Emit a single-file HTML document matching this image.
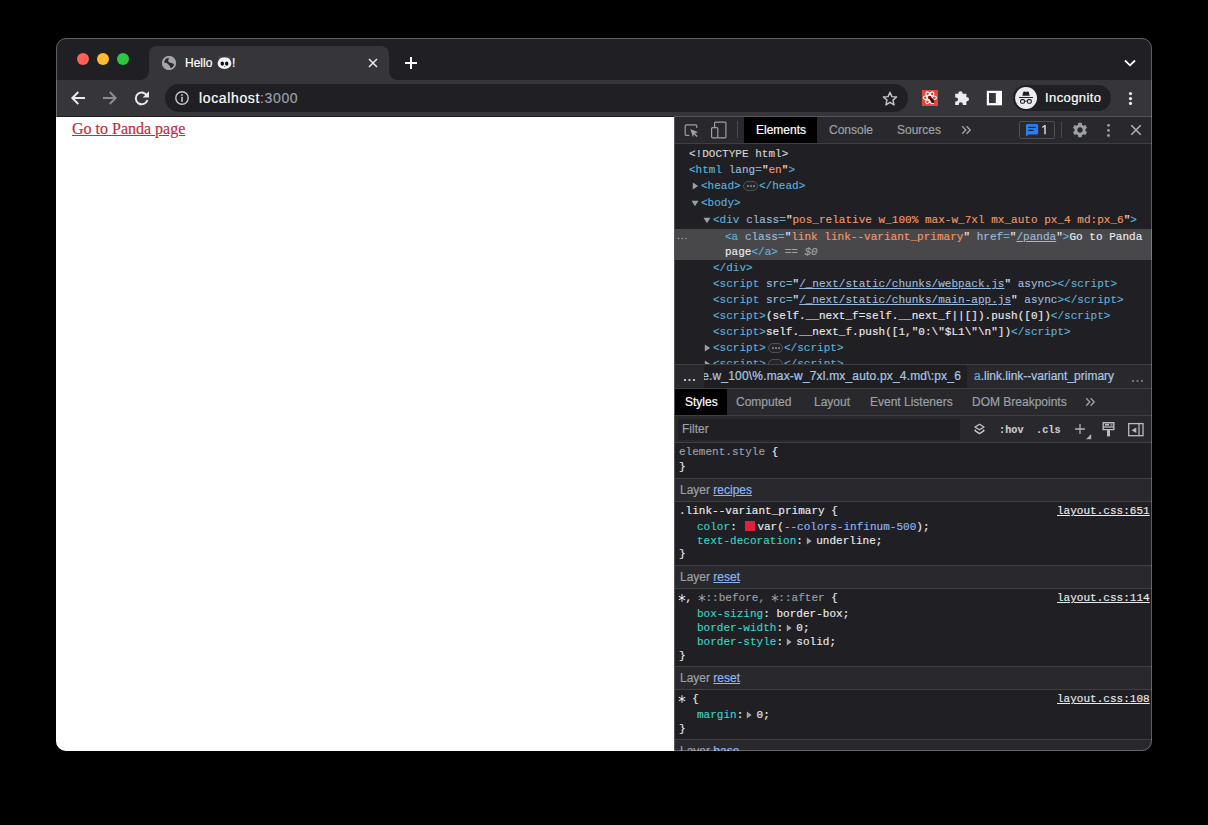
<!DOCTYPE html>
<html><head><meta charset="utf-8">
<style>
*{box-sizing:border-box;margin:0;padding:0}
html,body{width:1208px;height:825px;overflow:hidden;background:#000}
body{position:relative;font-family:"Liberation Sans",sans-serif}
.a{position:absolute}
#win{position:absolute;left:0;top:0;width:1208px;height:825px;clip-path:inset(38px 56px 74px 56px round 10px)}
#winborder{position:absolute;left:56px;top:38px;width:1096px;height:713px;border-radius:10px;border:1px solid rgba(255,255,255,0.28);pointer-events:none}
.dot{position:absolute;width:12px;height:12px;border-radius:50%}
.m{font-family:"Liberation Mono",monospace;font-size:11px;letter-spacing:0.022px;-webkit-text-stroke:0.15px currentColor;white-space:pre;line-height:16px;height:16px;position:absolute}
.s{font-family:"Liberation Sans",sans-serif;white-space:pre;position:absolute;-webkit-text-stroke:0.2px currentColor}
.tg{color:#5db0d7}
.at{color:#9bbbdc}
.av{color:#f29766}
.tx{color:#e8eaed}
.gr{color:#9aa0a6}
.pr{color:#35d4c7}
.u{text-decoration:underline}
</style></head>
<body>
<div id="win">
  <div class="a" style="left:56px;top:38px;width:1096px;height:42px;background:#201f24"></div>
  <!-- traffic lights -->
  <div class="dot" style="left:77px;top:53px;background:#ff5f57"></div>
  <div class="dot" style="left:97px;top:53px;background:#febc2e"></div>
  <div class="dot" style="left:117px;top:53px;background:#28c840"></div>
  <!-- active tab -->
  <div class="a" style="left:149px;top:46px;width:240px;height:34px;background:#36353a;border-radius:8px 8px 0 0"></div>
  <div class="a" style="left:141px;top:72px;width:8px;height:8px;background:radial-gradient(circle at 0 0, transparent 7.5px, #36353a 8px)"></div>
  <div class="a" style="left:389px;top:72px;width:8px;height:8px;background:radial-gradient(circle at 100% 0, transparent 7.5px, #36353a 8px)"></div>
  <div class="s" style="left:185px;top:56px;font-size:12px;color:#fff;line-height:14px">Hello</div>
  <div class="s" style="left:232px;top:56px;font-size:12px;color:#fff;line-height:14px">!</div>
  <!-- toolbar -->
  <div class="a" style="left:56px;top:80px;width:1096px;height:36px;background:#36353a"></div>
  <div class="a" style="left:56px;top:116px;width:1096px;height:1px;background:#201f24"></div>
  <!-- omnibox -->
  <div class="a" style="left:165px;top:84px;width:743px;height:28px;border-radius:14px;background:#201f24"></div>
  <div class="s" style="left:199px;top:90px;font-size:14px;line-height:16px;color:#fff;letter-spacing:0.64px">localhost<span style="color:#9aa0a6">:3000</span></div>
  <div class="a" style="left:1013px;top:85px;width:98px;height:26px;border-radius:13px;background:#201f24"></div>
  <div class="s" style="left:1045px;top:90px;font-size:13px;line-height:16px;color:#fff;letter-spacing:0.4px">Incognito</div>
  <!-- content -->
  <div class="a" style="left:56px;top:117px;width:618px;height:634px;background:#fff"></div>
  <div class="s" style="left:72px;top:119px;font-family:'Liberation Serif',serif;font-size:16px;color:#c62c3e;text-decoration:underline;line-height:20px">Go to Panda page</div>
  <!-- devtools -->
  <div class="a" style="left:674px;top:117px;width:478px;height:634px;background:#201f24"></div>
  <div class="a" style="left:674px;top:116px;width:478px;height:1px;background:#56565a"></div>
  <div class="a" style="left:674px;top:116px;width:1px;height:635px;background:#56565a"></div>

  <!-- devtools toolbar -->
  <div class="a" style="left:675px;top:117px;width:477px;height:26px;background:#29282d"></div>
  <div class="a" style="left:675px;top:143px;width:477px;height:1px;background:#3f3f42"></div>
  <div class="a" style="left:744px;top:117px;width:73px;height:26px;background:#000"></div>
  <div class="s" style="left:756px;top:123px;font-size:12px;line-height:14px;color:#fff">Elements</div>
  <div class="s" style="left:829px;top:123px;font-size:12px;line-height:14px;color:#9aa0a6">Console</div>
  <div class="s" style="left:897px;top:123px;font-size:12px;line-height:14px;color:#9aa0a6">Sources</div>
  <div class="a" style="left:737px;top:121px;width:1px;height:17px;background:#4a4a4d"></div>
  <div class="a" style="left:1061px;top:122px;width:1px;height:16px;background:#4a4a4d"></div>
  <div class="a" style="left:1019px;top:121px;width:36px;height:18px;border:1px solid #4d4d52;border-radius:2px"></div>
  <svg class="a" style="left:1041px;top:124px" width="7" height="12" viewBox="0 0 7 12"><path d="M4,1.3 V10.2" stroke="#d5d7da" stroke-width="1.5"/><path d="M1.3,3.4 L4.2,1.2" stroke="#d5d7da" stroke-width="1.3"/></svg>
  <!-- elements tree -->
  <div class="m" style="left:689px;top:146px;color:#d2d3d5">&lt;!DOCTYPE html&gt;</div>
  <div class="m" style="left:689px;top:162px"><span class="tg">&lt;html</span> <span class="at">lang</span><span class="tg">=</span><span class="tx">"</span><span class="av">en</span><span class="tx">"</span><span class="tg">&gt;</span></div>
  <div class="m" style="left:701px;top:178px"><span class="tg">&lt;head&gt;</span></div>
  <div class="m" style="left:701px;top:195px"><span class="tg">&lt;body&gt;</span></div>
  <div class="m" style="left:713px;top:212px"><span class="tg">&lt;div</span> <span class="at">class</span><span class="tg">=</span><span class="tx">"</span><span class="av">pos_relative w_100% max-w_7xl mx_auto px_4 md:px_6</span><span class="tx">"</span><span class="tg">&gt;</span></div>
  <div class="a" style="left:675px;top:229px;width:477px;height:31px;background:#48484b"></div>
  <div class="m" style="left:725px;top:229px"><span class="tg">&lt;a</span> <span class="at">class</span><span class="tg">=</span><span class="tx">"</span><span class="av">link link--variant_primary</span><span class="tx">"</span> <span class="at">href</span><span class="tg">=</span><span class="tx">"</span><span class="at u">/panda</span><span class="tx">"</span><span class="tg">&gt;</span><span class="tx">Go to Panda</span></div>
  <div class="m" style="left:725px;top:244px"><span class="tx">page</span><span class="tg">&lt;/a&gt;</span> <span class="gr">== <i>$0</i></span></div>
  <div class="m" style="left:713px;top:260px"><span class="tg">&lt;/div&gt;</span></div>
  <div class="m" style="left:713px;top:276px"><span class="tg">&lt;script</span> <span class="at">src</span><span class="tg">=</span><span class="tx">"</span><span class="at u">/_next/static/chunks/webpack.js</span><span class="tx">"</span> <span class="at">async</span><span class="tg">&gt;&lt;/script&gt;</span></div>
  <div class="m" style="left:713px;top:292px"><span class="tg">&lt;script</span> <span class="at">src</span><span class="tg">=</span><span class="tx">"</span><span class="at u">/_next/static/chunks/main-app.js</span><span class="tx">"</span> <span class="at">async</span><span class="tg">&gt;&lt;/script&gt;</span></div>
  <div class="m" style="left:713px;top:308px"><span class="tg">&lt;script&gt;</span><span class="tx">(self.__next_f=self.__next_f||[]).push([0])</span><span class="tg">&lt;/script&gt;</span></div>
  <div class="m" style="left:713px;top:324px"><span class="tg">&lt;script&gt;</span><span class="tx">self.__next_f.push([1,"0:\"$L1\"\n"])</span><span class="tg">&lt;/script&gt;</span></div>
  <div class="m" style="left:713px;top:340px"><span class="tg">&lt;script&gt;</span></div>
  <div class="m" style="left:713px;top:356px"><span class="tg">&lt;script&gt;</span></div>

  <!-- tree triangles & badges -->
  <svg class="a" style="left:692px;top:182px" width="7" height="8" viewBox="0 0 7 8"><path d="M0.8,0.5 L6.2,4 L0.8,7.5 Z" fill="#9aa0a6"/></svg>
  <svg class="a" style="left:691px;top:200px" width="8" height="7" viewBox="0 0 8 7"><path d="M0.5,0.8 L7.5,0.8 L4,6.2 Z" fill="#9aa0a6"/></svg>
  <svg class="a" style="left:703px;top:217px" width="8" height="7" viewBox="0 0 8 7"><path d="M0.5,0.8 L7.5,0.8 L4,6.2 Z" fill="#9aa0a6"/></svg>
  <svg class="a" style="left:704px;top:344px" width="7" height="8" viewBox="0 0 7 8"><path d="M0.8,0.5 L6.2,4 L0.8,7.5 Z" fill="#9aa0a6"/></svg>
  <svg class="a" style="left:704px;top:360px" width="7" height="8" viewBox="0 0 7 8"><path d="M0.8,0.5 L6.2,4 L0.8,7.5 Z" fill="#9aa0a6"/></svg>
  <div class="a" style="left:743px;top:181px;width:15px;height:10px;border:1px solid #505055;border-radius:5px;background:#26262a"></div>
  <svg class="a" style="left:746px;top:184px" width="10" height="4" viewBox="0 0 10 4"><circle cx="2" cy="2" r="0.85" fill="#bdc1c6"/><circle cx="5" cy="2" r="0.85" fill="#bdc1c6"/><circle cx="8" cy="2" r="0.85" fill="#bdc1c6"/></svg>
  <div class="m" style="left:759px;top:178px"><span class="tg">&lt;/head&gt;</span></div>
  <div class="a" style="left:768px;top:343px;width:15px;height:10px;border:1px solid #505055;border-radius:5px;background:#26262a"></div>
  <svg class="a" style="left:771px;top:346px" width="10" height="4" viewBox="0 0 10 4"><circle cx="2" cy="2" r="0.85" fill="#bdc1c6"/><circle cx="5" cy="2" r="0.85" fill="#bdc1c6"/><circle cx="8" cy="2" r="0.85" fill="#bdc1c6"/></svg>
  <div class="m" style="left:784px;top:340px"><span class="tg">&lt;/script&gt;</span></div>
  <div class="a" style="left:768px;top:359px;width:15px;height:10px;border:1px solid #505055;border-radius:5px;background:#26262a"></div>
  <div class="m" style="left:784px;top:356px"><span class="tg">&lt;/script&gt;</span></div>
  <svg class="a" style="left:677px;top:237px" width="11" height="3" viewBox="0 0 11 3"><circle cx="1.5" cy="1.5" r="0.8" fill="#9aa0a6"/><circle cx="5.3" cy="1.5" r="0.8" fill="#9aa0a6"/><circle cx="9.1" cy="1.5" r="0.8" fill="#9aa0a6"/></svg>
  <!-- breadcrumb -->
  <div class="a" style="left:675px;top:364px;width:477px;height:1px;background:#3f3f42"></div>
  <div class="a" style="left:675px;top:365px;width:477px;height:23px;background:#29282d"></div>
  <div class="a" style="left:675px;top:388px;width:477px;height:1px;background:#3f3f42"></div>
  <div class="a" style="left:704px;top:365px;width:263px;height:23px;background:#1f1f22;overflow:hidden"><div class="s" style="right:6px;top:4px;font-size:12px;line-height:14px;color:#a9c6e2;letter-spacing:0.18px">div.pos_relative.w_100\%.max-w_7xl.mx_auto.px_4.md\:px_6</div></div>
  <svg class="a" style="left:683px;top:378px" width="13" height="4" viewBox="0 0 13 4"><rect x="1" y="1" width="2" height="2" fill="#bdc1c6"/><rect x="5.5" y="1" width="2" height="2" fill="#bdc1c6"/><rect x="10" y="1" width="2" height="2" fill="#bdc1c6"/></svg>
  <svg class="a" style="left:1131px;top:379px" width="13" height="4" viewBox="0 0 13 4"><rect x="1" y="1" width="2" height="2" fill="#6f7378"/><rect x="5.5" y="1" width="2" height="2" fill="#6f7378"/><rect x="10" y="1" width="2" height="2" fill="#6f7378"/></svg>
  <div class="s" style="left:974px;top:369px;font-size:12px;line-height:14px;color:#a9c6e2"><span style="color:#5db0d7">a</span>.link.link--variant_primary</div>
  <!-- styles tabs -->
  <div class="a" style="left:675px;top:389px;width:477px;height:26px;background:#29282d"></div>
  <div class="a" style="left:675px;top:415px;width:477px;height:1px;background:#3f3f42"></div>
  <div class="a" style="left:675px;top:389px;width:52px;height:26px;background:#000"></div>
  <div class="s" style="left:685px;top:395px;font-size:12px;line-height:14px;color:#fff">Styles</div>
  <div class="s" style="left:736px;top:395px;font-size:12px;line-height:14px;color:#9aa0a6">Computed</div>
  <div class="s" style="left:814px;top:395px;font-size:12px;line-height:14px;color:#9aa0a6">Layout</div>
  <div class="s" style="left:870px;top:395px;font-size:12px;line-height:14px;color:#9aa0a6">Event Listeners</div>
  <div class="s" style="left:972px;top:395px;font-size:12px;line-height:14px;color:#9aa0a6">DOM Breakpoints</div>
  <!-- filter -->
  <div class="a" style="left:675px;top:416px;width:477px;height:26px;background:#29282d"></div>
  <div class="a" style="left:678px;top:419px;width:282px;height:21px;background:#201f24"></div>
  <div class="a" style="left:675px;top:442px;width:477px;height:1px;background:#3f3f42"></div>
  <div class="s" style="left:682px;top:422px;font-size:12px;line-height:14px;color:#9aa0a6">Filter</div>
  <div class="m" style="left:999px;top:423px;font-weight:bold;color:#c9cbce;font-size:10.2px">:hov</div>
  <div class="m" style="left:1036px;top:423px;font-weight:bold;color:#c9cbce;font-size:10.2px">.cls</div>

  <svg class="a" style="left:1085px;top:397px" width="11" height="10" viewBox="0 0 11 10"><path d="M1.2,1.2 L4.8,5 L1.2,8.8 M5.6,1.2 L9.2,5 L5.6,8.8" stroke="#9aa0a6" stroke-width="1.4" fill="none"/></svg>
  <svg class="a" style="left:973px;top:423px" width="13" height="12" viewBox="0 0 13 12"><path d="M6.5,1.2 L11,4 L6.5,6.8 L2,4 Z" stroke="#c5c7ca" stroke-width="1.3" fill="none" stroke-linejoin="round"/><path d="M3,6.9 L2,7.6 L6.5,10.6 L11,7.6 L10,6.9" stroke="#c5c7ca" stroke-width="1.3" fill="none" stroke-linejoin="round"/></svg>
  <svg class="a" style="left:1074px;top:423px" width="19" height="17" viewBox="0 0 19 17"><path d="M6,1 V11 M1,6 H11" stroke="#aeb1b5" stroke-width="1.3"/><path d="M17.2,11 V16.2 H12 Z" fill="#aeb1b5"/></svg>
  <svg class="a" style="left:1101px;top:421px" width="15" height="17" viewBox="0 0 15 17"><path d="M2.2,1.8 H12.8 V8.6 H2.2 Z" stroke="#b9bbbe" stroke-width="1.4" fill="none"/><path d="M2.2,6 H12.8" stroke="#b9bbbe" stroke-width="1.3"/><rect x="4" y="3" width="4" height="1.6" fill="#b9bbbe"/><rect x="9.5" y="2.8" width="2" height="2" fill="#8d9095"/><rect x="6" y="8.6" width="3" height="6.8" fill="#b9bbbe"/></svg>
  <svg class="a" style="left:1127px;top:422px" width="18" height="15" viewBox="0 0 18 15"><rect x="1.7" y="1.6" width="14.3" height="12.1" stroke="#b9bbbe" stroke-width="1.3" fill="none"/><path d="M12,1.6 V13.7" stroke="#b9bbbe" stroke-width="1.3"/><path d="M9.3,5.4 V11 L4.6,8.2 Z" fill="#b9bbbe"/></svg>
  <!-- style sections -->
  <div class="m gr" style="left:679px;top:444px">element.style <span class="tx">{</span></div>
  <div class="m tx" style="left:679px;top:459px">}</div>
  <div class="a" style="left:675px;top:478px;width:477px;height:1px;background:#3f3f42"></div>
  <div class="a" style="left:675px;top:479px;width:477px;height:22px;background:#29282d"></div>
  <div class="a" style="left:675px;top:501px;width:477px;height:1px;background:#3f3f42"></div>
  <div class="s" style="left:680px;top:483px;font-size:12px;line-height:14px;color:#9aa0a6">Layer <span class="u" style="color:#8ab4f8">recipes</span></div>
  <div class="m tx" style="left:679px;top:503px">.link--variant_primary {</div>
  <div class="m tx u" style="left:1057px;top:503px">layout.css:651</div>
  <div class="m tx" style="left:697px;top:519px"><span class="pr">color</span>: <span style="display:inline-block;width:10px;height:10px;background:#e0213d;vertical-align:-1px;margin:0 2px 0 2px"></span>var(<span style="color:#8ab4f8">--colors-infinum-500</span>);</div>
  <div class="m tx" style="left:697px;top:533px"><span class="pr">text-decoration</span>:  underline;</div>
  <div class="m tx" style="left:679px;top:546px">}</div>
  <div class="a" style="left:675px;top:565px;width:477px;height:1px;background:#3f3f42"></div>
  <div class="a" style="left:675px;top:566px;width:477px;height:22px;background:#29282d"></div>
  <div class="a" style="left:675px;top:588px;width:477px;height:1px;background:#3f3f42"></div>
  <div class="s" style="left:680px;top:570px;font-size:12px;line-height:14px;color:#9aa0a6">Layer <span class="u" style="color:#8ab4f8">reset</span></div>
  <div class="m tx" style="left:679px;top:590px"> , <span class="gr"> ::before,  ::after</span> {</div>
  <div class="m tx u" style="left:1057px;top:590px">layout.css:114</div>
  <div class="m tx" style="left:697px;top:606px"><span class="pr">box-sizing</span>: border-box;</div>
  <div class="m tx" style="left:697px;top:620px"><span class="pr">border-width</span>:  0;</div>
  <div class="m tx" style="left:697px;top:634px"><span class="pr">border-style</span>:  solid;</div>
  <div class="m tx" style="left:679px;top:648px">}</div>
  <div class="a" style="left:675px;top:666px;width:477px;height:1px;background:#3f3f42"></div>
  <div class="a" style="left:675px;top:667px;width:477px;height:22px;background:#29282d"></div>
  <div class="a" style="left:675px;top:689px;width:477px;height:1px;background:#3f3f42"></div>
  <div class="s" style="left:680px;top:671px;font-size:12px;line-height:14px;color:#9aa0a6">Layer <span class="u" style="color:#8ab4f8">reset</span></div>
  <div class="m tx" style="left:679px;top:691px">  {</div>
  <div class="m tx u" style="left:1057px;top:691px">layout.css:108</div>
  <div class="m tx" style="left:697px;top:707px"><span class="pr">margin</span>:  0;</div>
  <div class="m tx" style="left:679px;top:721px">}</div>
  <div class="a" style="left:675px;top:739px;width:477px;height:1px;background:#3f3f42"></div>
  <div class="a" style="left:675px;top:740px;width:477px;height:22px;background:#29282d"></div>
  <div class="s" style="left:680px;top:744px;font-size:12px;line-height:14px;color:#9aa0a6">Layer <span class="u" style="color:#8ab4f8">base</span></div>

  <!-- ICONS browser -->
  <svg class="a" style="left:162px;top:56px" width="14" height="14" viewBox="0 0 14 14"><circle cx="7" cy="7" r="7" fill="#a3a6aa"/><path d="M2.1,6.6 C2.3,4.8 3.3,3 4.8,2.3 L7.5,2.3 C6.3,3 6,4.6 6.5,5.8 C7,6.8 9,7 10.9,7.4 C11.6,7.7 12,8 12,8.5 C11.8,9.8 11.4,10.6 10.9,11.1 C10,11.8 9.2,12.1 8.3,12.2 C8.4,11.4 8.2,10.7 7.7,10.1 C7.2,9.2 6.6,8.6 6.1,8.2 C5.3,7.6 4.6,7.2 4,7.1 Z" fill="#2b2b2f"/><circle cx="7" cy="7" r="6.3" fill="none" stroke="#a3a6aa" stroke-width="1.3"/></svg>
  <svg class="a" style="left:217px;top:55px" width="15" height="15" viewBox="0 0 15 15"><circle cx="3.4" cy="3.2" r="2.3" fill="#48484b"/><circle cx="11.6" cy="3.2" r="2.3" fill="#48484b"/><path d="M7.5,2.2 C11.5,2.2 14.3,5 14.3,8.6 C14.3,11.8 11.5,13.9 7.5,13.9 C3.5,13.9 0.7,11.8 0.7,8.6 C0.7,5 3.5,2.2 7.5,2.2 Z" fill="#f4f4f6"/><ellipse cx="5.3" cy="8.7" rx="1.7" ry="2.1" fill="#0e0e10"/><ellipse cx="9.7" cy="8.7" rx="1.7" ry="2.1" fill="#0e0e10"/><path d="M6.8,11.3 H8.2 L7.5,12.3 Z" fill="#333"/></svg>
  <svg class="a" style="left:368px;top:58px" width="10" height="10" viewBox="0 0 10 10"><path d="M1,1 L9,9 M9,1 L1,9" stroke="#e8eaed" stroke-width="1.5" stroke-linecap="butt"/></svg>
  <svg class="a" style="left:404px;top:56px" width="14" height="14" viewBox="0 0 14 14"><path d="M7,1 V13 M1,7 H13" stroke="#fff" stroke-width="2"/></svg>
  <svg class="a" style="left:1124px;top:59px" width="12" height="8" viewBox="0 0 12 8"><path d="M1,1.5 L6,6.3 L11,1.5" stroke="#fff" stroke-width="1.8" fill="none"/></svg>
  <svg class="a" style="left:70px;top:90px" width="16" height="16" viewBox="0 0 16 16"><path d="M15,8 H2.5 M8.3,2 L2.3,8 L8.3,14" stroke="#e8eaed" stroke-width="1.9" fill="none"/></svg>
  <svg class="a" style="left:102px;top:90px" width="16" height="16" viewBox="0 0 16 16"><path d="M1,8 H13.5 M7.7,2 L13.7,8 L7.7,14" stroke="#8b8c8f" stroke-width="1.9" fill="none"/></svg>
  <svg class="a" style="left:134px;top:90px" width="16" height="16" viewBox="0 0 16 16"><path d="M13.2,6.2 A5.9,5.9 0 1 0 13.4,10" stroke="#e8eaed" stroke-width="2" fill="none"/><path d="M15,1.2 V7.6 H8.6 Z" fill="#e8eaed"/></svg>
  <svg class="a" style="left:175px;top:91px" width="14" height="14" viewBox="0 0 14 14"><circle cx="7" cy="7" r="6.2" stroke="#c4c7ca" stroke-width="1.4" fill="none"/><rect x="6.2" y="3.2" width="1.6" height="1.6" fill="#c4c7ca"/><rect x="6.2" y="5.8" width="1.6" height="5" fill="#c4c7ca"/></svg>
  <svg class="a" style="left:882px;top:91px" width="16" height="15" viewBox="0 0 16 15"><path d="M8,1.2 L9.9,5.6 L14.6,6 L11,9.1 L12.1,13.8 L8,11.3 L3.9,13.8 L5,9.1 L1.4,6 L6.1,5.6 Z" stroke="#c4c7ca" stroke-width="1.4" fill="none" stroke-linejoin="round"/></svg>
  <svg class="a" style="left:922px;top:90px" width="16" height="16" viewBox="0 0 16 16"><rect width="16" height="16" fill="#e2483a"/><g fill="none" stroke="#fff" stroke-width="1.1"><ellipse cx="7.8" cy="7.8" rx="6.6" ry="2.3"/><ellipse cx="7.8" cy="7.8" rx="6.6" ry="2.3" transform="rotate(60 7.8 7.8)"/><ellipse cx="7.8" cy="7.8" rx="6.6" ry="2.3" transform="rotate(-60 7.8 7.8)"/></g><circle cx="7.6" cy="7.3" r="1.6" fill="#7a0a10"/><ellipse cx="10.2" cy="10.4" rx="1.7" ry="2.9" fill="#3a0a08" transform="rotate(-35 10.2 10.4)"/></svg>
  <svg class="a" style="left:954px;top:90px" width="16" height="16" viewBox="0 0 16 16"><path d="M6.5,1.2 C7.8,1.2 8.6,2 8.6,3.2 L8.6,3.8 L12.4,3.8 L12.4,7.2 L13,7.2 C14.2,7.2 15,8 15,9.2 C15,10.4 14.2,11.2 13,11.2 L12.4,11.2 L12.4,15 L8.8,15 L8.8,14.2 C8.8,13 8,12.2 6.8,12.2 C5.6,12.2 4.8,13 4.8,14.2 L4.8,15 L1.2,15 L1.2,11.4 L2,11.4 C3.2,11.4 4,10.6 4,9.4 C4,8.2 3.2,7.4 2,7.4 L1.2,7.4 L1.2,3.8 L4.4,3.8 L4.4,3.2 C4.4,2 5.2,1.2 6.5,1.2 Z" fill="#ececf0"/></svg>
  <svg class="a" style="left:986px;top:90px" width="16" height="16" viewBox="0 0 16 16"><rect x="1.9" y="1.9" width="13.2" height="12.3" stroke="#fff" stroke-width="2.2" fill="none"/><rect x="9.8" y="1" width="5.2" height="14" fill="#fff"/></svg>
  <svg class="a" style="left:1015px;top:87px" width="22" height="22" viewBox="0 0 22 22"><circle cx="11" cy="11" r="11" fill="#ececf0"/><path d="M7.3,8.8 L8.2,5.2 C8.4,4.5 8.9,4.3 9.6,4.5 L11,4.9 L12.4,4.5 C13.1,4.3 13.6,4.5 13.8,5.2 L14.7,8.8 Z" fill="#201f24"/><rect x="4" y="10" width="14" height="1" fill="#201f24"/><rect x="5.6" y="12.6" width="3.9" height="3.7" rx="1.2" stroke="#201f24" stroke-width="1.1" fill="none"/><rect x="12.4" y="12.6" width="3.9" height="3.7" rx="1.2" stroke="#201f24" stroke-width="1.1" fill="none"/><path d="M9.5,14.1 H12.4" stroke="#201f24" stroke-width="0.9"/></svg>
  <svg class="a" style="left:1128px;top:91px" width="5" height="15" viewBox="0 0 5 15"><circle cx="2.5" cy="2.6" r="1.6" fill="#e8eaed"/><circle cx="2.5" cy="7.6" r="1.6" fill="#e8eaed"/><circle cx="2.5" cy="12.4" r="1.6" fill="#e8eaed"/></svg>
  <!-- ICONS devtools toolbar -->
  <svg class="a" style="left:684px;top:123px" width="16" height="16" viewBox="0 0 16 16"><path d="M5.3,12.4 H2.3 C1.6,12.4 1.2,12 1.2,11.3 V2.9 C1.2,2.2 1.6,1.8 2.3,1.8 H11.7 C12.4,1.8 12.8,2.2 12.8,2.9 V5" stroke="#9aa0a6" stroke-width="1.2" fill="none"/><path d="M6.3,6 L14.2,9.2 L11,10.2 L13.7,13 L12.6,14.1 L9.9,11.3 L8.9,14.3 Z" fill="#9aa0a6"/></svg>
  <svg class="a" style="left:710px;top:121px" width="18" height="18" viewBox="0 0 18 18"><path d="M4.6,6.2 V2.1 C4.6,1.5 5,1.1 5.6,1.1 H14.9 C15.5,1.1 15.9,1.5 15.9,2.1 V15.9 C15.9,16.5 15.5,16.9 14.9,16.9 H7.8" stroke="#9aa0a6" stroke-width="1.2" fill="none"/><rect x="1.6" y="6.7" width="6.2" height="10.2" rx="1" stroke="#9aa0a6" stroke-width="1.2" fill="none"/></svg>
  <svg class="a" style="left:961px;top:125px" width="11" height="10" viewBox="0 0 11 10"><path d="M1.2,1.2 L4.8,5 L1.2,8.8 M5.6,1.2 L9.2,5 L5.6,8.8" stroke="#9aa0a6" stroke-width="1.4" fill="none"/></svg>
  <svg class="a" style="left:1025px;top:123px" width="14" height="14" viewBox="0 0 14 14"><path d="M2.6,1 H11.6 C12.5,1 13.1,1.6 13.1,2.5 V10 C13.1,10.9 12.5,11.5 11.6,11.5 H3.8 L0.9,13.5 V2.6 C0.9,1.7 1.6,1 2.6,1 Z" fill="#2a7ef2"/><path d="M3.4,4.3 H10.7 M3.4,7.3 H8.6" stroke="#201f24" stroke-width="1.3"/></svg>
  <svg class="a" style="left:1071px;top:121px" width="18" height="18" viewBox="0 0 24 24"><path fill="#9aa0a6" d="M19.14 12.94c.04-.3.06-.61.06-.94 0-.32-.02-.64-.07-.94l2.03-1.58c.18-.14.23-.41.12-.61l-1.92-3.32c-.12-.22-.37-.29-.59-.22l-2.39.96c-.5-.38-1.03-.7-1.62-.94l-.36-2.54c-.04-.24-.24-.41-.48-.41h-3.84c-.24 0-.43.17-.47.41l-.36 2.54c-.59.24-1.13.57-1.62.94l-2.39-.96c-.22-.08-.47 0-.59.22L2.74 8.87c-.12.21-.08.47.12.61l2.03 1.58c-.05.3-.09.63-.09.94s.02.64.07.94l-2.03 1.58c-.18.14-.23.41-.12.61l1.92 3.32c.12.22.37.29.59.22l2.39-.96c.5.38 1.03.7 1.62.94l.36 2.54c.05.24.24.41.48.41h3.84c.24 0 .44-.17.47-.41l.36-2.54c.59-.24 1.13-.56 1.62-.94l2.39.96c.22.08.47 0 .59-.22l1.92-3.32c.12-.22.07-.47-.12-.61l-2.01-1.58zM12 15.6c-1.98 0-3.6-1.62-3.6-3.6s1.62-3.6 3.6-3.6 3.6 1.62 3.6 3.6-1.62 3.6-3.6 3.6z"/></svg>
  <svg class="a" style="left:1106px;top:123px" width="5" height="15" viewBox="0 0 5 15"><circle cx="2.5" cy="2.3" r="1.4" fill="#9aa0a6"/><circle cx="2.5" cy="7.4" r="1.4" fill="#9aa0a6"/><circle cx="2.5" cy="12.5" r="1.4" fill="#9aa0a6"/></svg>
  <svg class="a" style="left:1130px;top:124px" width="12" height="12" viewBox="0 0 12 12"><path d="M1.3,1.3 L10.7,10.7 M10.7,1.3 L1.3,10.7" stroke="#aeb1b5" stroke-width="1.6"/></svg>
  <svg class="a" style="left:805.5px;top:536.5px" width="6" height="8" viewBox="0 0 6 8"><path d="M0.8,0.6 L5.6,4 L0.8,7.4 Z" fill="#a0a4a8"/></svg>
  <svg class="a" style="left:785.5px;top:623.5px" width="6" height="8" viewBox="0 0 6 8"><path d="M0.8,0.6 L5.6,4 L0.8,7.4 Z" fill="#a0a4a8"/></svg>
  <svg class="a" style="left:785.5px;top:637.5px" width="6" height="8" viewBox="0 0 6 8"><path d="M0.8,0.6 L5.6,4 L0.8,7.4 Z" fill="#a0a4a8"/></svg>
  <svg class="a" style="left:746.0px;top:710.5px" width="6" height="8" viewBox="0 0 6 8"><path d="M0.8,0.6 L5.6,4 L0.8,7.4 Z" fill="#a0a4a8"/></svg>
  <svg class="a" style="left:678.3px;top:593.6px" width="8" height="8" viewBox="0 0 8 8"><path d="M4,0.3 V7.7 M0.8,2.15 L7.2,5.85 M0.8,5.85 L7.2,2.15" stroke="#e8eaed" stroke-width="1.05"/></svg>
  <svg class="a" style="left:698.2px;top:593.6px" width="8" height="8" viewBox="0 0 8 8"><path d="M4,0.3 V7.7 M0.8,2.15 L7.2,5.85 M0.8,5.85 L7.2,2.15" stroke="#9aa0a6" stroke-width="1.05"/></svg>
  <svg class="a" style="left:770.7px;top:593.6px" width="8" height="8" viewBox="0 0 8 8"><path d="M4,0.3 V7.7 M0.8,2.15 L7.2,5.85 M0.8,5.85 L7.2,2.15" stroke="#9aa0a6" stroke-width="1.05"/></svg>
  <svg class="a" style="left:678.3px;top:694.8px" width="8" height="8" viewBox="0 0 8 8"><path d="M4,0.3 V7.7 M0.8,2.15 L7.2,5.85 M0.8,5.85 L7.2,2.15" stroke="#e8eaed" stroke-width="1.05"/></svg>
</div>
<div id="winborder"></div>
</body></html>
